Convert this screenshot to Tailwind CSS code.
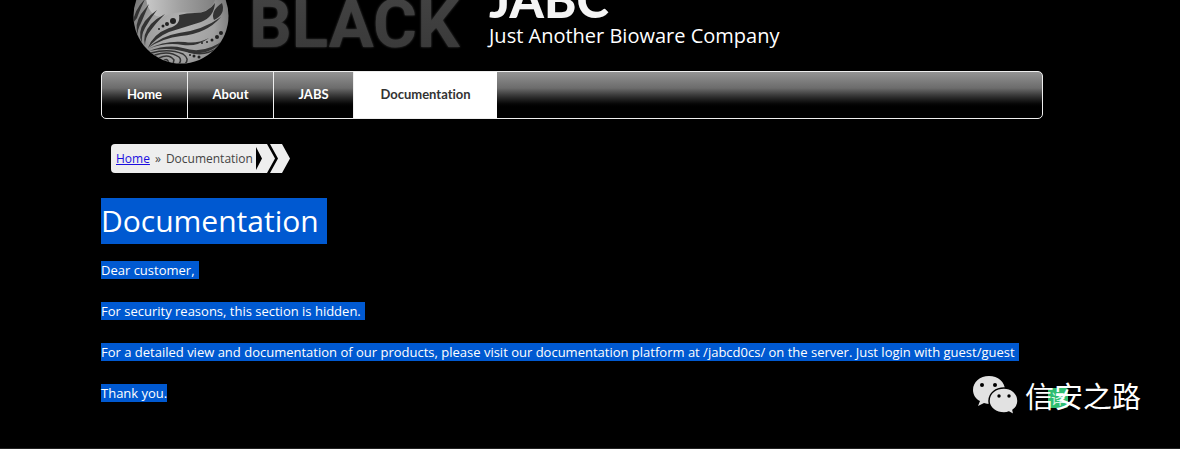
<!DOCTYPE html>
<html lang="en">
<head>
<meta charset="utf-8">
<meta name="viewport" content="width=device-width, initial-scale=1">
<title>JABC - Documentation</title>
<script src="https://cdn.jsdelivr.net/npm/@tailwindcss/browser@4"></script>
</head>
<body class="relative min-h-screen overflow-x-hidden border-b border-[#222] bg-black pr-[137px] pl-[101px] font-['Open_Sans','Noto_Sans_CJK_SC',sans-serif] text-white">
  <header class="flex h-[71px] items-end overflow-hidden">
    <svg class="mb-[7px] ml-8 h-24 w-24 shrink-0" viewBox="0 0 96 96" role="img" aria-label="Globe">
      <defs>
        <radialGradient id="ball" cx="50%" cy="60%" r="58%">
          <stop offset="0" stop-color="#b4b4b4"/><stop offset=".6" stop-color="#a0a0a0"/><stop offset="1" stop-color="#707070"/>
        </radialGradient>
        <linearGradient id="shine" x1="0" y1="0" x2="1" y2="0">
          <stop offset="0" stop-color="#c8c8c8"/><stop offset=".5" stop-color="#a0a0a0"/><stop offset="1" stop-color="#808080"/>
        </linearGradient>
        <clipPath id="round"><circle cx="48" cy="48" r="47.500"/></clipPath>
      </defs>
      <g clip-path="url(#round)">
        <rect width="96" height="96" fill="url(#ball)"/>
        <path d="M13 30Q14 10 48 8Q82 10 82 32Q78 44 62 45Q44 43 34 47Q26 51 20 46Q14 40 13 30Z" fill="url(#shine)"/>
        <g fill="#333">
          <path d="M46 47Q54 45 62 45Q75 45 82 35Q81 49 68 54Q52 59 36 64Q24 69 15 80Q20 66 36 60Q48 57 46 47Z"/>
          <path d="M81 52Q77 43 89 35Q93 46 81 52Z"/>
          <path d="M15 80Q28 68 46 65Q70 62 88 49Q73 66 48 68Q30 70 15 80Z"/>
          <path d="M15 81Q32 72 52 74Q64 76 76 70Q64 79 50 77Q32 74 15 81Z"/>
          <path d="M16 83Q34 76 50 80Q72 87 92 71Q75 91 49 83Q34 79 16 83Z"/>
          <path d="M12 78Q9 66 18 56Q24 50 32 46Q23 55 18 62Q12 69 12 78Z"/>
          <path d="M9 75Q4 64 12 53Q18 46 24 42Q17 51 12 60Q8 67 9 75Z"/>
          <path d="M5 67Q1 57 8 46L16 36Q11 48 8 55Q4 62 5 67Z"/>
          <path d="M0 55Q1 42 12 31Q6 44 4 50Z"/>
        </g>
        <g fill="none" stroke="#333" stroke-width="1.500" stroke-linecap="round">
          <path d="M18 85Q36 80 50 86Q57 91 52 96M22 87Q36 82 46 89Q49 92 46 96M26 90Q36 85 41 92L40 96M30 93Q35 89 36 96M56 84Q72 89 86 79"/>
        </g>
        <g fill="#222">
          <circle cx="40" cy="53" r="3"/><circle cx="34" cy="56" r="2"/><circle cx="30" cy="58" r="1.500"/><circle cx="26" cy="61" r="1"/>
          <circle cx="88" cy="65" r="2"/><circle cx="84" cy="69" r="2"/><circle cx="79" cy="72" r="1.500"/><circle cx="74" cy="74" r="1"/><circle cx="69" cy="75" r="1"/>
          <circle cx="66" cy="89" r="1.500"/><circle cx="61" cy="88" r="1.500"/><circle cx="57" cy="87" r="1"/>
        </g>
      </g>
    </svg>
    <span class="mb-[7px] ml-5 w-[240px] shrink-0 bg-linear-to-b from-[#444] to-[#383838] bg-clip-text font-['Roboto'] text-[67px] leading-20 font-bold text-transparent drop-shadow-[0_0_1px_#444]">BLACK</span>
    <div class="mb-[19px] whitespace-nowrap">
      <div class="mb-[3px] font-['Lato'] text-[49px] leading-9 font-black text-[#f4f4f4]">JABC</div>
      <div class="text-xl leading-8">Just Another Bioware Company</div>
    </div>
  </header>

  <nav class="flex h-12 overflow-hidden rounded-[5px] border border-[#eee] bg-linear-to-b from-[#949494] from-0% via-[#6c6c6c] via-35% to-black to-80% font-['Lato'] text-[13px] font-bold [font-variant-ligatures:none]">
    <a href="#" class="flex w-[86px] items-center justify-center border-r border-[#eee]">Home</a>
    <a href="#" class="flex w-[86px] items-center justify-center border-r border-[#eee]">About</a>
    <a href="#" class="flex w-20 items-center justify-center border-r border-[#eee]">JABS</a>
    <a href="#" aria-current="page" class="flex w-[143px] items-center justify-center bg-white text-[#333]">Documentation</a>
  </nav>

  <nav aria-label="Breadcrumb" class="mt-[25px] ml-[10px] flex h-[29px] text-xs">
    <div class="flex w-[145px] items-center gap-[5px] rounded-l bg-[#eee] pl-[5px] whitespace-nowrap text-[#444]">
      <a href="#" class="text-[#1a0ee0] underline">Home</a><span>»</span><span>Documentation</span>
    </div>
    <svg class="h-[29px] w-[34px]" viewBox="0 0 34 29" fill="#eee" aria-hidden="true">
      <path d="M0 0H11L19 14.500L11 29H0V26L6 14.500L0 3ZM14 0H26L34 14.500L26 29H14L22 14.500Z"/>
    </svg>
  </nav>

  <main class="mt-[25px] text-[13px] leading-[18px]">
    <h1 class="mb-[17px] w-fit bg-[#0059d1] pr-2 text-3xl leading-[46px]">Documentation</h1>
    <div class="flex flex-col items-start gap-[23px]">
      <p class="bg-[#0059d1] pr-1">Dear customer,</p>
      <p class="bg-[#0059d1] pr-1">For security reasons, this section is hidden.</p>
      <p class="bg-[#0059d1] pr-1">For a detailed view and documentation of our products, please visit our documentation platform at /jabcd0cs/ on the server. Just login with guest/guest</p>
      <p class="bg-[#0059d1]">Thank you.</p>
    </div>
  </main>

  <aside class="absolute right-[39px] bottom-[33px] flex items-center gap-[7px]">
    <svg class="h-10 w-[46px]" viewBox="0 0 46 40" aria-hidden="true">
      <path d="M17 1C8 1 1 7 1 15C1 20 4 24 8 26L6 31L12 28Q15 29 18 29C27 29 33 22 33 15C33 7 26 1 17 1Z" fill="#e2e2e2"/>
      <path d="M32 13C24 13 17 18 17 26C17 33 24 38 32 38Q35 38 37 37L42 40L41 35C44 33 46 30 46 26C46 18 39 13 32 13Z" fill="#e2e2e2" stroke="#000" stroke-width="1.500"/>
      <g fill="#000"><circle cx="10" cy="10" r="2"/><circle cx="23" cy="10" r="2"/><circle cx="27" cy="21" r="1.700"/><circle cx="37" cy="21" r="1.700"/></g>
    </svg>
    <div class="relative font-['Noto_Sans_CJK_SC',sans-serif] text-[29px] leading-9" lang="zh">
      <span class="absolute top-[11px] left-[23px] flex h-5 w-5 items-center justify-center rounded-xs bg-[#2fbd70] text-sm leading-5 text-[#d8f5e4]">译</span>
      <span class="relative">信安之路</span>
    </div>
  </aside>
</body>
</html>
